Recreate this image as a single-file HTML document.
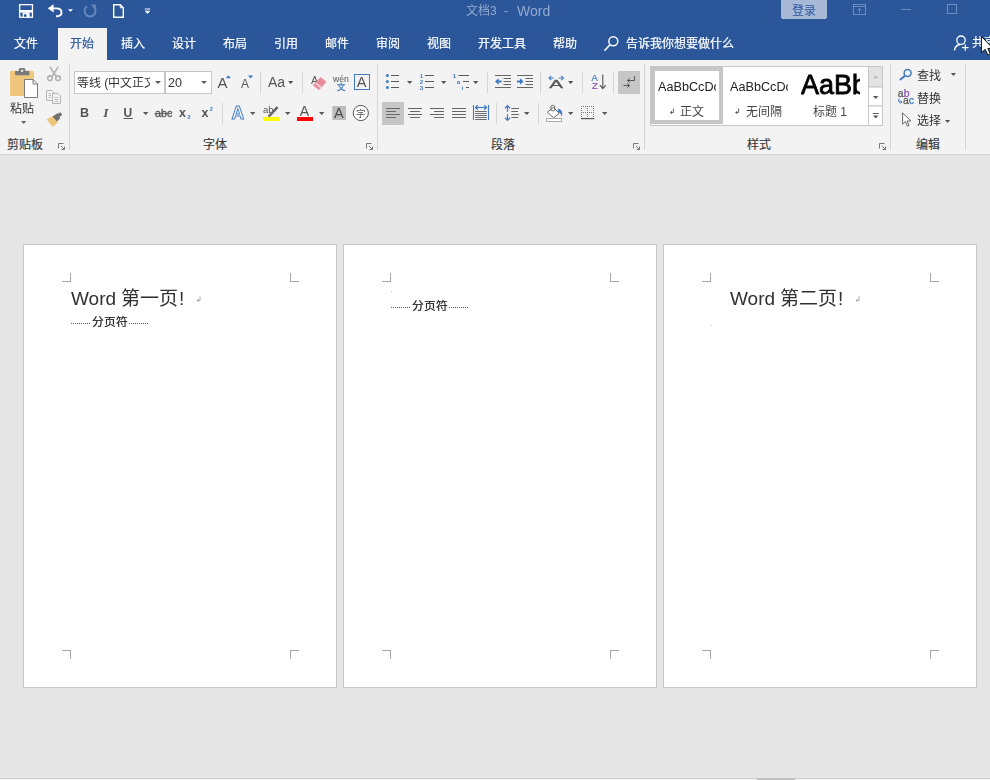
<!DOCTYPE html>
<html lang="zh-CN">
<head>
<meta charset="utf-8">
<title>文档3 - Word</title>
<style>
html,body{margin:0;padding:0;}
body{width:990px;height:780px;overflow:hidden;position:relative;background:#e6e6e6;
  font-family:"Liberation Sans",sans-serif;font-size:12px;color:#262626;}
.a{position:absolute;}
.t{position:absolute;white-space:nowrap;line-height:12px;font-size:12px;margin-top:1px;}
.t.n{margin-top:0;}
.g{will-change:transform;}
svg{position:absolute;overflow:visible;}
#titlebar{left:0;top:0;width:990px;height:60px;background:#2b579a;}
#ribbon{left:0;top:60px;width:990px;height:94px;background:#f3f3f3;border-bottom:1px solid #d3d3d3;}
#tabsel{left:58px;top:28px;width:49px;height:32px;background:#f3f3f3;}
.tab{will-change:transform;color:#fff;top:37px;-webkit-text-stroke:0.2px #fff;}
.sep{position:absolute;width:1px;background:#d4d4d4;}
.gl{color:#3a3a3a;top:138px;-webkit-text-stroke:0.15px #3a3a3a;}
.box{position:absolute;background:#fff;border:1px solid #c6c6c6;box-sizing:border-box;}
.page{position:absolute;top:244px;width:314px;height:444px;background:#fff;border:1px solid #c8c8c8;box-sizing:border-box;}
.dd{position:absolute;width:0;height:0;border-left:3px solid transparent;border-right:3px solid transparent;border-top:3px solid #5a5a5a;}
.cm{position:absolute;width:9px;height:9px;box-sizing:border-box;border:0 solid #a6a6a6;}
.doc{will-change:transform;position:absolute;white-space:nowrap;font-size:19px;line-height:19px;color:#303030;}
.pb{will-change:transform;position:absolute;white-space:nowrap;font-size:11.8px;line-height:12px;color:#111;-webkit-text-stroke:0.15px #111;}
.dots{position:absolute;height:1px;background:repeating-linear-gradient(90deg,#555 0,#555 1px,transparent 1px,transparent 2px);}
</style>
</head>
<body>
<!-- ===== title bar + tab row ===== -->
<div class="a" id="titlebar"></div>
<div class="a" id="tabsel"></div>

<!-- QAT icons -->
<svg id="qat" style="left:0;top:0" width="160" height="26" viewBox="0 0 160 26">
  <!-- save -->
  <rect x="19.65" y="4.65" width="12.8" height="12.6" fill="none" stroke="#fff" stroke-width="1.3"/>
  <rect x="20" y="10" width="12" height="2.6" fill="#fff"/>
  <rect x="22.6" y="12.4" width="7" height="5" fill="#fff"/>
  <rect x="23.9" y="14.3" width="2.6" height="2.5" fill="#2b579a"/>
  <!-- undo -->
  <path d="M51 8.4H56.4C60 8.4 61.5 10.4 61.5 12.4C61.5 14.6 59.6 16.2 56 16.3" fill="none" stroke="#fff" stroke-width="1.9"/>
  <path d="M47.8 8.3L53.6 4.2V12.4Z" fill="#fff"/>
  <path d="M68 9.2H73L70.5 11.8Z" fill="#fff"/>
  <!-- redo (disabled) -->
  <path d="M87 6.4A5.5 5.5 0 1 0 93.4 6.6" fill="none" stroke="#6686bd" stroke-width="2"/>
  <path d="M90.6 4.4H95.8V9.6Z" fill="#6686bd"/>
  <!-- new doc -->
  <path d="M113.7 4.8H120.3L123.3 7.8V17.2H113.7Z" fill="none" stroke="#fff" stroke-width="1.4"/>
  <path d="M120.3 4.8V7.8H123.3" fill="none" stroke="#fff" stroke-width="1"/>
  <!-- customize -->
  <path d="M144.8 9H150.2" stroke="#fff" stroke-width="1"/>
  <path d="M144.6 10.8H150.4L147.5 14Z" fill="#fff"/>
</svg>

<!-- title -->
<div class="t g" style="left:466px;top:4px;color:#93a9d0;font-size:12px;">文档3</div>
<div class="t g" style="left:504px;top:4px;color:#93a9d0;font-size:13px;">-</div>
<div class="t g" style="left:517px;top:3px;color:#93a9d0;font-size:14px;line-height:14px;">Word</div>

<!-- login button -->
<div class="a" style="left:781px;top:0;width:46px;height:19px;background:#a8b9d7;border-radius:0 0 2px 2px;"></div>
<div class="t g" style="left:792px;top:4px;color:#2b579a;">登录</div>

<!-- window controls (inactive) -->
<svg style="left:850px;top:0" width="140" height="26" viewBox="850 0 140 26">
  <g fill="none" stroke="#6d8cc0" stroke-width="1">
    <rect x="853.5" y="4.5" width="12" height="10"/>
    <path d="M853.5 6.5H865.5"/>
    <path d="M859.5 13V8.5M857.5 10.5L859.5 8.5L861.5 10.5"/>
    <path d="M901 9.5H911"/>
    <rect x="947.5" y="4.5" width="9" height="9"/>
  </g>
</svg>

<!-- tabs -->
<div class="t tab" style="left:14px;">文件</div>
<div class="t tab" style="left:70px;color:#2b579a;-webkit-text-stroke:0.2px #2b579a;">开始</div>
<div class="t tab" style="left:121px;">插入</div>
<div class="t tab" style="left:172px;">设计</div>
<div class="t tab" style="left:223px;">布局</div>
<div class="t tab" style="left:274px;">引用</div>
<div class="t tab" style="left:325px;">邮件</div>
<div class="t tab" style="left:376px;">审阅</div>
<div class="t tab" style="left:427px;">视图</div>
<div class="t tab" style="left:478px;">开发工具</div>
<div class="t tab" style="left:553px;">帮助</div>
<svg style="left:600px;top:30px" width="22" height="24" viewBox="600 30 22 24">
  <circle cx="613.3" cy="41.2" r="4.5" fill="none" stroke="#fff" stroke-width="1.4"/>
  <path d="M610 44.8L604.4 50.8" stroke="#fff" stroke-width="1.6"/>
</svg>
<div class="t tab" style="left:626px;">告诉我你想要做什么</div>

<!-- share -->
<svg style="left:950px;top:30px" width="40" height="28" viewBox="950 30 40 28">
  <circle cx="961" cy="40.2" r="4.2" fill="none" stroke="#fff" stroke-width="1.3"/>
  <path d="M954.4 50.5C955 46.5 958 44.6 960.5 44.5" fill="none" stroke="#fff" stroke-width="1.3"/>
  <path d="M962 47.6H968.6M965.3 44.4V50.8" stroke="#fff" stroke-width="1.2"/>
</svg>
<div class="t n tab" style="left:972px;">共享</div>
<!-- mouse cursor -->
<svg style="left:978px;top:32px" width="14" height="26" viewBox="0 0 14 26">
  <path d="M3.4 4.4V20.8L7.2 17.3L9.8 23L12.3 21.9L9.8 16.4H15Z" fill="#fff" stroke="#111" stroke-width="1"/>
</svg>

<!-- ===== ribbon ===== -->
<div class="a" id="ribbon"></div>
<!-- group separators -->
<div class="sep" style="left:69px;top:64px;height:86px;"></div>
<div class="sep" style="left:377px;top:64px;height:86px;"></div>
<div class="sep" style="left:644px;top:64px;height:86px;"></div>
<div class="sep" style="left:890px;top:64px;height:86px;"></div>
<div class="sep" style="left:965px;top:64px;height:86px;"></div>
<!-- small separators -->
<div class="sep" style="left:260px;top:72px;height:21px;"></div>
<div class="sep" style="left:302px;top:72px;height:21px;"></div>
<div class="sep" style="left:222px;top:103px;height:21px;"></div>
<div class="sep" style="left:487px;top:72px;height:21px;"></div>
<div class="sep" style="left:540px;top:72px;height:21px;"></div>
<div class="sep" style="left:582px;top:72px;height:21px;"></div>
<div class="sep" style="left:613px;top:72px;height:21px;"></div>
<div class="sep" style="left:496px;top:103px;height:21px;"></div>
<div class="sep" style="left:538px;top:103px;height:21px;"></div>

<!-- group labels -->
<div class="t gl" style="left:7px;">剪贴板</div>
<div class="t gl" style="left:203px;">字体</div>
<div class="t gl" style="left:491px;">段落</div>
<div class="t gl" style="left:747px;">样式</div>
<div class="t gl" style="left:916px;">编辑</div>

<!-- dialog launchers -->
<svg style="left:0;top:140px" width="990" height="12" viewBox="0 140 990 12">
  <g transform="translate(58 143)"><path d="M0.5 5.5V0.5H5.5" fill="none" stroke="#777" stroke-width="1"/><path d="M3 3L6.5 6.5M6.5 3.5V6.5H3.5" fill="none" stroke="#777" stroke-width="1"/></g>
  <g transform="translate(366 143)"><path d="M0.5 5.5V0.5H5.5" fill="none" stroke="#777" stroke-width="1"/><path d="M3 3L6.5 6.5M6.5 3.5V6.5H3.5" fill="none" stroke="#777" stroke-width="1"/></g>
  <g transform="translate(633 143)"><path d="M0.5 5.5V0.5H5.5" fill="none" stroke="#777" stroke-width="1"/><path d="M3 3L6.5 6.5M6.5 3.5V6.5H3.5" fill="none" stroke="#777" stroke-width="1"/></g>
  <g transform="translate(879 143)"><path d="M0.5 5.5V0.5H5.5" fill="none" stroke="#777" stroke-width="1"/><path d="M3 3L6.5 6.5M6.5 3.5V6.5H3.5" fill="none" stroke="#777" stroke-width="1"/></g>
</svg>

<!-- ===== clipboard group ===== -->
<svg style="left:0;top:60px" width="70" height="94" viewBox="0 60 70 94">
  <!-- paste -->
  <rect x="10" y="70.8" width="24" height="25.2" rx="1.6" fill="#eec67c"/>
  <rect x="15" y="71" width="14.4" height="4.2" rx="0.8" fill="#7a7a7a"/>
  <rect x="18.8" y="68" width="6.6" height="4.6" rx="1.6" fill="#7a7a7a"/>
  <rect x="21" y="69.8" width="2.2" height="2" fill="#f3f3f3"/>
  <path d="M24.5 79.5H33L37.5 84V97.5H24.5Z" fill="#fff" stroke="#7a7a7a" stroke-width="1"/>
  <path d="M33 79.5V84H37.5" fill="none" stroke="#7a7a7a" stroke-width="1"/>
  <path d="M21 121H26.4L23.7 124Z" fill="#666"/>
  <!-- cut (disabled) -->
  <g fill="none" stroke="#b2b2b2" stroke-width="1.6">
    <path d="M49.8 66.6L56.6 77M58.4 66.6L51.6 77"/>
    <circle cx="50" cy="78.2" r="2.3"/><circle cx="58" cy="78.2" r="2.3"/>
  </g>
  <!-- copy (disabled) -->
  <g fill="#f3f3f3" stroke="#b4b4b4" stroke-width="1">
    <path d="M46.5 90.5H52L54.5 93V100.5H46.5Z"/>
    <path d="M52.5 93.5H58L60.5 96V103.5H52.5Z"/>
    <path d="M48.5 93.5H51M48.5 95.5H51M48.5 97.5H51M54.5 97.5H58.5M54.5 99.5H58.5M54.5 101.5H58.5" stroke-width="0.8"/>
  </g>
  <!-- format painter -->
  <path d="M46.4 119.2L53.2 116L58 122.2L52.8 127Z" fill="#eec67c"/>
  <path d="M52.6 116.4L57.4 113.2L60.2 118.2L57 121.6Z" fill="#707070"/>
  <path d="M57 114.2L60.6 112.2L62.2 115L59 117.2Z" fill="#707070"/>
</svg>
<div class="t" style="left:10px;top:102px;color:#333;">粘贴</div>

<!-- ===== font group ===== -->
<div class="box" style="left:74px;top:71px;width:91px;height:23px;"></div>
<div class="box" style="left:165px;top:71px;width:47px;height:23px;"></div>
<div class="t n" style="left:77px;top:77px;width:73px;overflow:hidden;font-size:12px;line-height:13px;height:13px;color:#333;">等线 (中文正文</div>
<div class="dd" style="left:155px;top:81px;"></div>
<div class="t n" style="left:168px;top:77px;font-size:12.5px;line-height:13px;color:#333;">20</div>
<div class="dd" style="left:201px;top:81px;"></div>

<svg style="left:70px;top:60px" width="310" height="94" viewBox="70 60 310 94">
  <g font-family="Liberation Sans, sans-serif" fill="#555">
    <!-- grow / shrink -->
    <text x="217.6" y="88.4" font-size="15">A</text>
    <path d="M225.8 78.2H231L228.4 75.2Z" fill="#3f7ac2"/>
    <text x="241" y="88.4" font-size="12">A</text>
    <path d="M248 75.4H253.2L250.6 78.4Z" fill="#3f7ac2"/>
    <!-- Aa -->
    <text x="268" y="86.8" font-size="14">Aa</text>
    <path d="M288 81H293.4L290.7 84Z"/>
    <!-- clear format -->
    <text x="311" y="84" font-size="11">A</text>
    <path d="M320.6 77.6L326 82L319 89.6L313.4 85.2Z" fill="#e98a9b" stroke="#e98a9b" stroke-width="1" stroke-linejoin="round"/>
    <path d="M315.6 83L321 87.4" stroke="#f8dbe1" stroke-width="1.4"/>
    <!-- phonetic guide -->
    <text x="333" y="81.6" font-size="8.6">wén</text>
    <text x="336.6" y="90.4" font-size="8.4" fill="#3f7ac2" font-weight="bold">文</text>
    <!-- char border -->
    <rect x="354.5" y="74.5" width="15" height="15" fill="none" stroke="#3f7ac2" stroke-width="1"/>
    <text x="356.8" y="87.4" font-size="14.5">A</text>
    <!-- B I U -->
    <text x="80" y="117" font-size="12.5" font-weight="bold">B</text>
    <text x="103.2" y="117" font-size="13.4" font-style="italic" font-family="Liberation Serif, serif" font-weight="bold">I</text>
    <text x="123.6" y="116.6" font-size="12" font-weight="bold">U</text>
    <path d="M123.6 118.5H132.8" stroke="#555" stroke-width="1"/>
    <path d="M143 112H148.4L145.7 115Z"/>
    <!-- strikethrough -->
    <text x="155" y="117" font-size="10.8" stroke="#555" stroke-width="0.3">abc</text>
    <path d="M154.4 113.6H172" stroke="#555" stroke-width="0.9"/>
    <!-- sub / sup -->
    <text x="179" y="117" font-size="12.5" font-weight="bold">x</text>
    <text x="187.6" y="119.2" font-size="5.6" font-weight="bold" fill="#3f7ac2">2</text>
    <text x="201.5" y="117" font-size="12.5" font-weight="bold">x</text>
    <text x="209.8" y="111" font-size="5.6" font-weight="bold" fill="#3f7ac2">2</text>
    <!-- text effects -->
    <text x="231.4" y="118.6" font-size="17.5" font-weight="bold" fill="#fff" stroke="#3f7ac2" stroke-width="0.9">A</text>
    <path d="M250 112H255.4L252.7 115Z"/>
    <!-- highlight -->
    <text x="263" y="113" font-size="9.5">ab</text>
    <path d="M267.5 116L276.5 106.2L278.6 108L269.8 117.2Z" fill="#6a6a6a"/>
    <rect x="263" y="117" width="16" height="4" fill="#ffff00"/>
    <path d="M285 112H290.4L287.7 115Z"/>
    <!-- font colour -->
    <text x="299.8" y="116" font-size="14">A</text>
    <rect x="297" y="117" width="16" height="4" fill="#ff0000"/>
    <path d="M319 112H324.4L321.7 115Z"/>
    <!-- char shading -->
    <rect x="332.3" y="106" width="13.7" height="14" fill="#bdbdbd"/>
    <text x="334" y="118.4" font-size="14.5" fill="#4a4a4a">A</text>
    <!-- enclosed char -->
    <circle cx="360.8" cy="113" r="7.6" fill="#fff" stroke="#555" stroke-width="1"/>
    <text x="356" y="116.6" font-size="9.5">字</text>
  </g>
</svg>

<!-- ===== paragraph group ===== -->
<div class="a" style="left:382px;top:102px;width:22px;height:23px;background:#c6c6c6;"></div>
<div class="a" style="left:618px;top:71px;width:22px;height:23px;background:#c6c6c6;"></div>
<svg style="left:378px;top:60px" width="268" height="94" viewBox="378 60 268 94">
  <g fill="#555" stroke="none" font-family="Liberation Sans, sans-serif">
    <!-- bullets -->
    <g fill="#3f7ac2"><circle cx="387.4" cy="75.5" r="1.5"/><circle cx="387.4" cy="81.5" r="1.5"/><circle cx="387.4" cy="87.5" r="1.5"/></g>
    <path d="M391 75.5H399M391 81.5H399M391 87.5H399" stroke="#5a5a5a" stroke-width="1"/>
    <path d="M407 81H412.4L409.7 84Z"/>
    <!-- numbering -->
    <g fill="#3f7ac2" font-size="6.2" font-weight="bold"><text x="419.8" y="77.8">1</text><text x="419.8" y="83.8">2</text><text x="419.8" y="89.8">3</text></g>
    <path d="M425 75.5H434M425 81.5H434M425 87.5H434" stroke="#5a5a5a" stroke-width="1"/>
    <path d="M441 81H446.4L443.7 84Z"/>
    <!-- multilevel -->
    <g fill="#3f7ac2" font-size="6.2" font-weight="bold"><text x="452.8" y="77.8">1</text><text x="456.8" y="83.6">a</text><text x="461.6" y="89.8">i</text></g>
    <path d="M458.4 75.5H469M463 81.5H469M466 87.5H469" stroke="#5a5a5a" stroke-width="1"/>
    <path d="M473 81H478.4L475.7 84Z"/>
    <!-- decrease indent -->
    <path d="M495 75.5H511M503.5 78.5H511M503.5 81.5H511M503.5 84.5H511M495 87.5H511" stroke="#666" stroke-width="1"/>
    <path d="M495 81.5L498.6 78.2V80.6H501.6V82.4H498.6V84.8Z" fill="#3f7ac2"/>
    <!-- increase indent -->
    <path d="M517 75.5H533M525.5 78.5H533M525.5 81.5H533M525.5 84.5H533M517 87.5H533" stroke="#666" stroke-width="1"/>
    <path d="M523.6 81.5L520 78.2V80.6H517V82.4H520V84.8Z" fill="#3f7ac2"/>
    <!-- asian layout -->
    <text x="0" y="0" font-size="10.6" transform="translate(549.2 88.2) scale(1.95 1)" fill="#555" stroke="#555" stroke-width="0.25">A</text>
    <path d="M549.4 78H553.6M558.8 78H563" stroke="#3f7ac2" stroke-width="1.1"/>
    <path d="M551.2 75.8L549 78L551.2 80.2M561.2 75.8L563.4 78L561.2 80.2" fill="none" stroke="#3f7ac2" stroke-width="1.1"/>
    <path d="M568 81H573.4L570.7 84Z"/>
    <!-- sort -->
    <text x="591.6" y="80.8" font-size="9.4" fill="#3f7ac2" stroke="#3f7ac2" stroke-width="0.2">A</text>
    <text x="592" y="88.8" font-size="9.4" fill="#8e4fa8" stroke="#8e4fa8" stroke-width="0.2">Z</text>
    <path d="M602.8 74.4V88.4M599.9 85.2L602.8 88.6L605.7 85.2" fill="none" stroke="#555" stroke-width="1.1"/>
    <!-- show marks -->
    <path d="M634.5 76V80.5H627.5M629.8 78.4L627.3 80.5L629.8 82.6" fill="none" stroke="#555" stroke-width="1"/>
    <path d="M623.5 85.5H629.5M627.2 83.4L629.7 85.5L627.2 87.6" fill="none" stroke="#555" stroke-width="1"/>
    <!-- align left (selected) -->
    <path d="M386 108.5H400M386 111.5H396M386 114.5H400M386 117.5H396" stroke="#666" stroke-width="1"/>
    <!-- center -->
    <path d="M408 108.5H422M410 111.5H420M408 114.5H422M410 117.5H420" stroke="#666" stroke-width="1"/>
    <!-- right -->
    <path d="M430 108.5H444M434 111.5H444M430 114.5H444M434 117.5H444" stroke="#666" stroke-width="1"/>
    <!-- justify -->
    <path d="M452 108.5H466M452 111.5H466M452 114.5H466M452 117.5H466" stroke="#666" stroke-width="1"/>
    <!-- distributed -->
    <path d="M473.5 105V120M488.5 105V120" stroke="#3f7ac2" stroke-width="1.1"/>
    <path d="M475.6 107.5H486.4" stroke="#3f7ac2" stroke-width="1.2"/>
    <path d="M477.8 105.2L475.4 107.5L477.8 109.8M484.2 105.2L486.6 107.5L484.2 109.8" fill="none" stroke="#3f7ac2" stroke-width="1.2"/>
    <path d="M475.2 111.5H486.8M475.2 113.5H486.8M475.2 115.5H486.8M475.2 117.5H486.8M475.2 119.5H486.8" stroke="#6a6a6a" stroke-width="1"/>
    <!-- line spacing -->
    <path d="M507.5 106V111.8M507.5 114.2V120" stroke="#3f7ac2" stroke-width="1.2"/>
    <path d="M505 108.2L507.5 105.6L510 108.2M505 117.8L507.5 120.4L510 117.8" fill="none" stroke="#3f7ac2" stroke-width="1.3"/>
    <path d="M511.4 108.5H519M511.4 111.5H518M511.4 114.5H519M511.4 117.5H518" stroke="#666" stroke-width="1"/>
    <path d="M524 112H529.4L526.7 115Z"/>
    <!-- shading -->
    <path d="M553.4 107.4L559.2 113.2L553.6 117.8L547.4 112.2Z" fill="#fff" stroke="#666" stroke-width="1"/>
    <rect x="551" y="105.4" width="3.6" height="5.4" rx="1.2" fill="none" stroke="#666" stroke-width="1"/>
    <path d="M558.4 108.4C561.6 109.4 563.2 113 561.8 116.4C561 113.8 560 112.8 557.6 111.8Z" fill="#3f7ac2"/>
    <rect x="546.5" y="118.5" width="15" height="3" fill="#fff" stroke="#aaa" stroke-width="1"/>
    <path d="M568 112H573.4L570.7 115Z"/>
    <!-- borders -->
    <g stroke="#777" stroke-width="1" stroke-dasharray="1 1" fill="none">
      <path d="M581.5 106V118M587.5 106V118M593.5 106V118M581 106.5H594M581 112.5H594"/>
    </g>
    <path d="M581 118.6H594.4" stroke="#555" stroke-width="1.2"/>
    <path d="M602 112H607.4L604.7 115Z"/>
  </g>
</svg>
<!-- ===== styles group ===== -->
<div class="a" style="left:650px;top:66px;width:233px;height:60px;background:#fff;border:1px solid #c6c6c6;box-sizing:border-box;"></div>
<div class="a" style="left:651px;top:67px;width:72px;height:57px;border:4px solid #c6c6c6;box-sizing:border-box;background:#fff;"></div>
<div class="t n" style="left:658px;top:80px;font-size:13.6px;line-height:14px;width:58px;height:15px;overflow:hidden;color:#222;"><span style="display:inline-block;transform:scaleX(0.93);transform-origin:0 0;">AaBbCcDc</span></div>
<div class="t n" style="left:730px;top:80px;font-size:13.6px;line-height:14px;width:58px;height:15px;overflow:hidden;color:#222;"><span style="display:inline-block;transform:scaleX(0.93);transform-origin:0 0;">AaBbCcDc</span></div>
<div class="t n" style="left:801px;top:71px;font-size:27px;line-height:28px;width:59px;height:30px;overflow:hidden;color:#000;-webkit-text-stroke:0.8px #000;">AaBb</div>
<div class="t" style="left:680px;top:105px;color:#444;">正文</div>
<div class="t" style="left:746px;top:105px;color:#444;">无间隔</div>
<div class="t" style="left:813px;top:105px;color:#444;">标题 1</div>
<svg style="left:650px;top:60px" width="240" height="70" viewBox="650 60 240 70">
  <g fill="none" stroke="#555" stroke-width="0.9">
    <path d="M673.4 108.5V112.5H670.6M672 111L670.4 112.5L672 114"/>
    <path d="M738.6 108.5V112.5H735.8M737.2 111L735.6 112.5L737.2 114"/>
  </g>
  <!-- gallery scroll buttons -->
  <rect x="868.5" y="66.5" width="14" height="20.5" fill="#e3e3e3" stroke="#c6c6c6"/>
  <rect x="868.5" y="87" width="14" height="19" fill="#fff" stroke="#c6c6c6"/>
  <rect x="868.5" y="106" width="14" height="19.5" fill="#fff" stroke="#c6c6c6"/>
  <path d="M873 78.2H878.4L875.7 75.2Z" fill="#bdbdbd"/>
  <path d="M873 96H878.4L875.7 99Z" fill="#555"/>
  <path d="M872.8 113.5H878.6" stroke="#555" stroke-width="1"/>
  <path d="M873 115.6H878.4L875.7 118.6Z" fill="#555"/>
</svg>

<!-- ===== editing group ===== -->
<svg style="left:892px;top:60px" width="76" height="94" viewBox="892 60 76 94">
  <!-- find -->
  <circle cx="907.6" cy="73" r="3.5" fill="none" stroke="#3f7ac2" stroke-width="1.5"/>
  <path d="M905 75.8L899.8 80" stroke="#3f7ac2" stroke-width="2"/>
  <path d="M950.8 73H956L953.4 76Z" fill="#555"/>
  <!-- replace -->
  <g font-family="Liberation Sans, sans-serif" font-size="10.4" stroke-width="0.25">
    <text x="897.8" y="97.2" fill="#555" stroke="#555">a</text><text x="903.8" y="97.2" fill="#8e4fa8" stroke="#8e4fa8">b</text>
    <text x="903" y="104.2" fill="#555" stroke="#555">a</text><text x="908.8" y="104.2" fill="#3f7ac2" stroke="#3f7ac2">c</text>
  </g>
  <path d="M898.8 98.6V102H901.8M900.4 100.5L902 102L900.4 103.5" fill="none" stroke="#3f7ac2" stroke-width="1"/>
  <!-- select -->
  <path d="M902.6 112.8V124.2L905.4 121.6L907.4 126.2L909 125.4L907 121H910.8Z" fill="#fff" stroke="#555" stroke-width="0.9"/>
  <path d="M945 120H950.2L947.6 123Z" fill="#555"/>
</svg>
<div class="t" style="left:917px;top:69px;color:#333;">查找</div>
<div class="t" style="left:917px;top:92px;color:#333;">替换</div>
<div class="t" style="left:917px;top:114px;color:#333;">选择</div>



<!-- ===== document ===== -->
<div class="page" style="left:23px;"></div>
<div class="page" style="left:343px;"></div>
<div class="page" style="left:663px;"></div>
<div class="cm" style="left:62px;top:273px;border-right-width:1px;border-bottom-width:1px;"></div>
<div class="cm" style="left:290px;top:273px;border-left-width:1px;border-bottom-width:1px;"></div>
<div class="cm" style="left:62px;top:650px;border-right-width:1px;border-top-width:1px;"></div>
<div class="cm" style="left:290px;top:650px;border-left-width:1px;border-top-width:1px;"></div>
<div class="cm" style="left:382px;top:273px;border-right-width:1px;border-bottom-width:1px;"></div>
<div class="cm" style="left:610px;top:273px;border-left-width:1px;border-bottom-width:1px;"></div>
<div class="cm" style="left:382px;top:650px;border-right-width:1px;border-top-width:1px;"></div>
<div class="cm" style="left:610px;top:650px;border-left-width:1px;border-top-width:1px;"></div>
<div class="cm" style="left:702px;top:273px;border-right-width:1px;border-bottom-width:1px;"></div>
<div class="cm" style="left:930px;top:273px;border-left-width:1px;border-bottom-width:1px;"></div>
<div class="cm" style="left:702px;top:650px;border-right-width:1px;border-top-width:1px;"></div>
<div class="cm" style="left:930px;top:650px;border-left-width:1px;border-top-width:1px;"></div>
<!-- page 1 -->
<div class="doc" style="left:71px;top:289px;">Word 第一页<span style="position:absolute;left:108px;top:0;">!</span></div>
<svg style="left:195px;top:294px" width="8" height="10" viewBox="0 0 8 10"><path d="M5 2.5V6.5H2.2M3.4 5.2L2 6.5L3.4 7.8" fill="none" stroke="#909090" stroke-width="0.8"/></svg>
<div class="dots" style="left:71px;top:323px;width:20px;"></div>
<div class="pb" style="left:92px;top:316px;">分页符</div>
<div class="dots" style="left:129px;top:323px;width:20px;"></div>
<!-- page 2 -->
<div class="dots" style="left:391px;top:307px;width:20px;"></div>
<div class="pb" style="left:412px;top:300px;">分页符</div>
<div class="dots" style="left:449px;top:307px;width:20px;"></div>
<div class="a" style="left:391px;top:291px;width:1px;height:1px;background:#c4c4c4;"></div>
<div class="a" style="left:711px;top:325px;width:1px;height:1px;background:#c4c4c4;"></div>
<!-- page 3 -->
<div class="doc" style="left:730px;top:289px;">Word 第二页<span style="position:absolute;left:108px;top:0;">!</span></div>
<svg style="left:854px;top:294px" width="8" height="10" viewBox="0 0 8 10"><path d="M5 2.5V6.5H2.2M3.4 5.2L2 6.5L3.4 7.8" fill="none" stroke="#909090" stroke-width="0.8"/></svg>


<!-- bottom scroll hint -->
<div class="a" style="left:0;top:778px;width:990px;height:2px;background:#f3f3f3;border-top:1px solid #cdcdcd;box-sizing:border-box;"></div>
<div class="a" style="left:757px;top:778px;width:38px;height:2px;background:#c2c2c2;"></div>
</body>
</html>
